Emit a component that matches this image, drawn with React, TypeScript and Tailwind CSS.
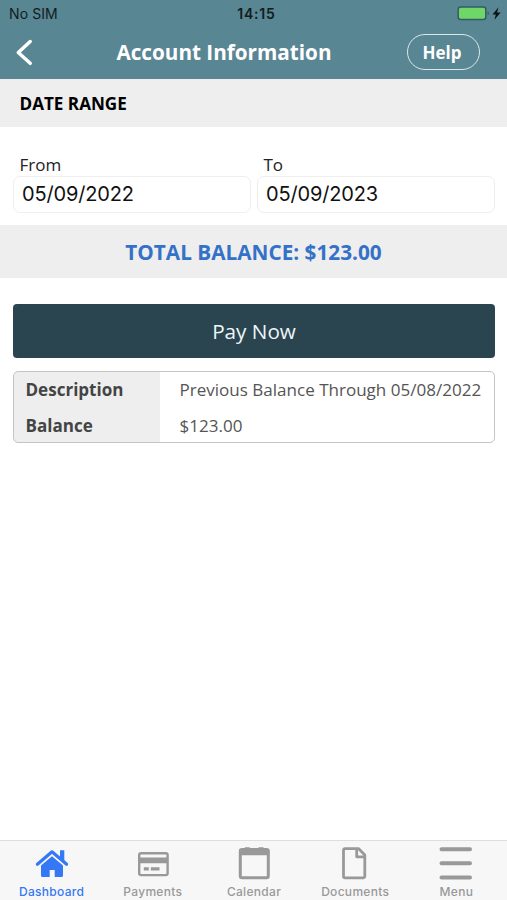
import type { ReactNode } from "react";

const tabs = [
  { label: "Dashboard", icon: <HomeIcon />, active: true },
  { label: "Payments", icon: <CardIcon /> },
  { label: "Calendar", icon: <CalendarIcon /> },
  { label: "Documents", icon: <DocumentIcon /> },
  { label: "Menu", icon: <MenuIcon /> }
];

const rows = [
  { label: "Description", value: "Previous Balance Through 05/08/2022" },
  { label: "Balance", value: "$123.00" }
];

function HomeIcon() {
  return (
    <svg width="34" height="36" viewBox="0 0 34 36" fill="currentColor">
      <path d="M2.400 19.200 17 6.800l14.600 12.400" fill="none" stroke="currentColor" strokeWidth="3.200" strokeLinecap="round" strokeLinejoin="round" />
      <path d="M25 5.300h4.300v11.500L25 13.100z" />
      <path d="M17 11.300 28 20.600v10a1.500 1.500 0 0 1-1.500 1.500H19.700v-7.200h-5v7.200H7.500A1.500 1.500 0 0 1 6 30.600v-10z" />
    </svg>
  );
}

function CardIcon() {
  return (
    <svg width="34" height="36" viewBox="0 0 34 36" fill="currentColor">
      <rect x="3.200" y="8.300" width="28.400" height="21.800" rx="1.800" fill="none" stroke="currentColor" strokeWidth="2.400" />
      <path d="M3 12.500h29v5.700H3zM7.800 22.300h5v3.200h-5zM14.800 22.300h8.700v3.200h-8.700z" />
    </svg>
  );
}

function CalendarIcon() {
  return (
    <svg width="34" height="36" viewBox="0 0 34 36" fill="currentColor">
      <rect x="3.300" y="4.500" width="28" height="28.200" rx="1.800" fill="none" stroke="currentColor" strokeWidth="3" />
      <path d="M2.300 4.200h30v6h-30zM7.800 2.200h5v3h-5zM21.500 2.200h5v3h-5z" />
    </svg>
  );
}

function DocumentIcon() {
  return (
    <svg width="34" height="36" viewBox="0 0 34 36" fill="none" stroke="currentColor" strokeWidth="2.800" strokeLinejoin="round">
      <path d="M7.100 3.600h13.400l6.300 6.300v21.300a1.600 1.600 0 0 1-1.600 1.600H7.100a1.600 1.600 0 0 1-1.600-1.600V5.200a1.600 1.600 0 0 1 1.600-1.600z" />
      <path d="M18.700 4v7.800h8" />
    </svg>
  );
}

function MenuIcon() {
  return (
    <svg width="34" height="36" viewBox="0 0 34 36" fill="none" stroke="currentColor" strokeWidth="4" strokeLinecap="round">
      <path d="M2.500 4.200h28.500M2.500 18.300h28.500M2.500 32.400h28.500" />
    </svg>
  );
}

function StatusBar() {
  return (
    <div className="grid h-7 grid-cols-3 items-center pl-[9px] pr-[5px] font-['Inter',sans-serif] text-[14px] leading-none text-[#111c20]">
      <span className="tracking-[0.1px]">No SIM</span>
      <span className="pl-0.5 text-center font-semibold tracking-[0.8px]">14:15</span>
      <svg width="45" height="16" viewBox="0 0 45 16" className="justify-self-end">
        <rect x="1.200" y="1" width="27.600" height="12.600" rx="2.500" fill="#6fd768" stroke="#365c66" strokeWidth="1.500" />
        <path d="M30.600 5.300v4c1.800-.6 1.800-3.400 0-4z" fill="#365c66" />
        <path d="M41.500 1.200 35.500 8.500h3.300l-1.300 5.300 6.100-7.400H40z" fill="#0c1214" />
      </svg>
    </div>
  );
}

function Header() {
  return (
    <header className="h-[79px] bg-[#598693]">
      <StatusBar />
      <div className="grid h-12 grid-cols-[80px_1fr_100px] items-center text-white">
        <button type="button" aria-label="Back" className="pl-[15px]">
          <svg width="18" height="28" viewBox="0 0 18 28" fill="none" stroke="currentColor" strokeWidth="3.500" strokeLinecap="round" strokeLinejoin="round">
            <path d="M15.200 3.500 3.300 14.500l11.900 10.800" />
          </svg>
        </button>
        <h1 className="whitespace-nowrap pr-[39px] pt-px text-center text-[20.700px] font-bold leading-none">Account Information</h1>
        <button type="button" className="h-9 w-[73px] rounded-full border-[1.5px] border-[#dce7ea] pr-[3px] text-[17px] font-bold leading-none">
          Help
        </button>
      </div>
    </header>
  );
}

function DateField({ label, value }: { label: string; value: string }) {
  return (
    <label className="flex flex-col">
      <span className="pl-[6.500px] pt-px text-[17px] leading-[23px] text-[#222]">{label}</span>
      <span className="flex h-[37px] items-center rounded-[7px] border border-[#eeeeee] pb-0.5 pl-2 font-['Inter',sans-serif] text-[20px] tracking-[-0.15px] text-[#111]">
        {value}
      </span>
    </label>
  );
}

function Tab({ label, icon, active }: { label: string; icon: ReactNode; active?: boolean }) {
  return (
    <button
      type="button"
      className={`flex flex-col items-center pt-1 font-['Inter',sans-serif] text-[12px] font-medium leading-3 tracking-[0.3px] ${active ? "text-[#3478f6]" : "text-[#999999]"}`}
    >
      {icon}
      <span className="mt-[5px]">{label}</span>
    </button>
  );
}

export default function App() {
  return (
    <div className="flex h-[900px] w-[507px] flex-col overflow-hidden bg-white font-['Open_Sans',sans-serif]">
      <Header />
      <h2 className="flex h-12 items-center bg-[#eeeeee] pl-[19.500px] pt-px text-[17.100px] font-bold text-black">DATE RANGE</h2>

      <div className="grid grid-cols-2 gap-1.5 pb-3 pl-[13px] pr-3 pt-[25px]">
        <DateField label="From" value="05/09/2022" />
        <DateField label="To" value="05/09/2023" />
      </div>

      <div className="flex h-[53px] items-center justify-center bg-[#eeeeee] pt-0.5 text-[20.750px] font-bold text-[#3471c8]">
        TOTAL BALANCE: $123.00
      </div>

      <main className="flex-1 pl-[13px] pr-3 pt-[26px]">
        <button type="button" className="h-[54px] w-full rounded-[4px] bg-[#2a4550] pt-0.5 text-[20.700px] text-[#eef5f7]">
          Pay Now
        </button>
        <dl className="mt-[13px] h-[72px] overflow-hidden rounded-[5px] border-[1.5px] border-[#c4c4c4] bg-[linear-gradient(to_right,#eeeeee_146px,white_146px)] text-[17.050px] text-[#555]">
          {rows.map((row) => (
            <div key={row.label} className="flex h-9 items-center">
              <dt className="w-[146px] pl-[11.500px] font-bold text-[#444]">{row.label}</dt>
              <dd className="pl-[19.500px]">{row.value}</dd>
            </div>
          ))}
        </dl>
      </main>

      <nav className="grid h-[60px] grid-cols-5 border-t border-[#dedede] bg-[#f7f7f7] pl-px">
        {tabs.map((tab) => (
          <Tab key={tab.label} {...tab} />
        ))}
      </nav>
    </div>
  );
}
